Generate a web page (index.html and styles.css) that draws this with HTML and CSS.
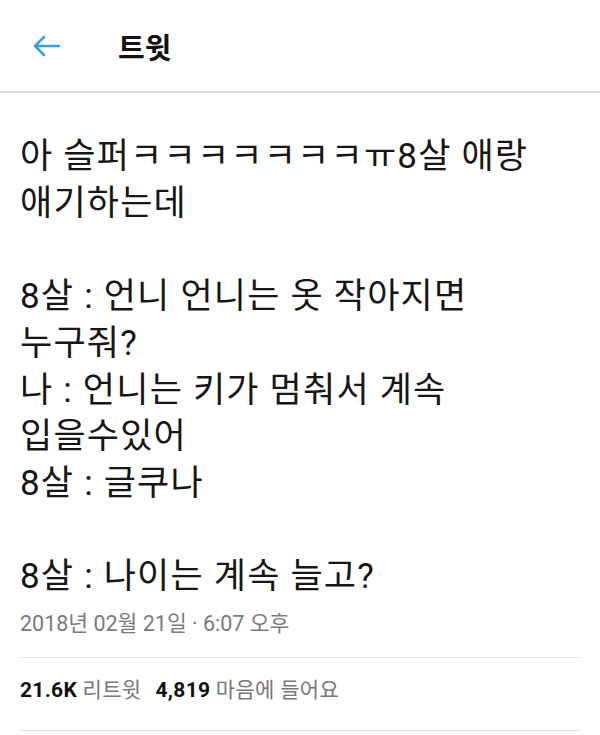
FILE: index.html
```html
<!DOCTYPE html>
<html lang="ko">
<head>
  <meta charset="UTF-8" />
  <title>트윗</title>
  <link rel="stylesheet" href="styles.css">
</head>
<body>
  <div class="header">
    <svg class="back" width="30" height="24" viewBox="0 0 30 24">
      <path d="M28 12H4M13 3L4 12l9 9" fill="none" stroke="#3a9fe0" stroke-width="2.6" stroke-linecap="round" stroke-linejoin="round"/>
    </svg>
    <h1>트윗</h1>
  </div>

  <div class="tweet">
    <p class="tweet-text">아 슬퍼ㅋㅋㅋㅋㅋㅋㅋㅠ8살 애랑<br>애기하는데<br><br>8살 : 언니 언니는 옷 작아지면<br>누구줘?<br>나 : 언니는 키가 멈춰서 계속<br>입을수있어<br>8살 : 글쿠나<br><br>8살 : 나이는 계속 늘고?</p>
    <div class="meta">2018년 02월 21일 · 6:07 오후</div>
    <div class="stats">
      <span><strong>21.6K</strong> 리트윗</span>
      <span><strong>4,819</strong> 마음에 들어요</span>
    </div>
  </div>
</body>
</html>
```

FILE: styles.css
```css
body {
  margin: 0;
  background: #fff;
  font-family: Roboto, 'Noto Sans CJK KR', sans-serif;
  color: #161616;
}

.header {
  height: 93px;
  display: flex;
  align-items: center;
  border-bottom: 2px solid #dcdcdc;
  box-sizing: border-box;
}

.back {
  margin-left: 31px;
  margin-right: 57px;
}

.header h1 {
  margin: 0;
  font-size: 29px;
  font-weight: 700;
  color: #111;
}

.tweet {
  padding: 0 20px;
}

.tweet-text {
  margin: 41px 0 0;
  font-size: 35px;
  letter-spacing: 1.2px;
  line-height: 46.7px;
}

.meta {
  margin-top: 5px;
  font-size: 21.5px;
  color: #7a7a7a;
  padding-bottom: 20px;
  border-bottom: 1px solid #e4e4e4;
}

.stats {
  display: flex;
  gap: 14px;
  padding: 15px 0 27px;
  font-size: 21px;
  color: #777;
  border-bottom: 1px solid #e4e4e4;
}

.stats span {
  letter-spacing: 0.3px;
}

.stats strong {
  color: #111;
  font-weight: 700;
}
```
